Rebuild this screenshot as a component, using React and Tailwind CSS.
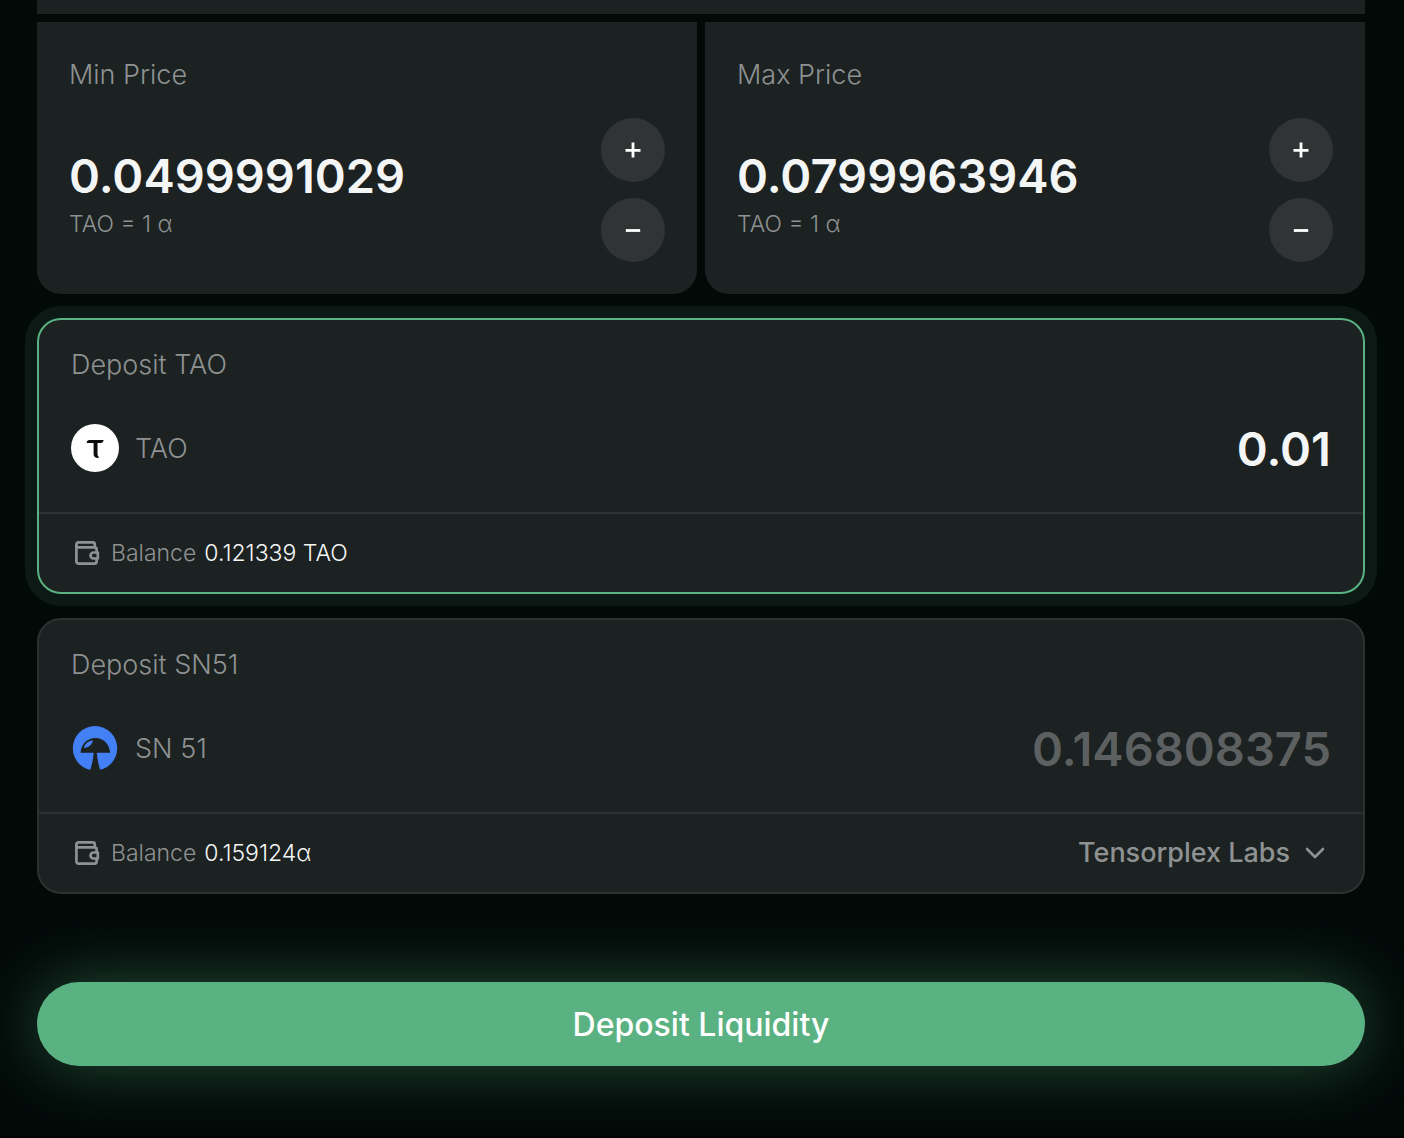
import { useState } from 'react';

function PlusIcon() {
  return (
    <svg width="16" height="16" viewBox="0 0 16 16" fill="none" stroke="currentColor" strokeWidth="2.8" aria-hidden="true">
      <path d="M8 0.5v15M0.5 8.4h15" />
    </svg>
  );
}

function MinusIcon() {
  return (
    <svg width="16" height="16" viewBox="0 0 16 16" fill="none" stroke="currentColor" strokeWidth="2.8" aria-hidden="true">
      <path d="M0.8 8.5h14.4" />
    </svg>
  );
}

function WalletIcon() {
  return (
    <svg width="32" height="32" viewBox="0 0 32 32" fill="none" stroke="currentColor" strokeWidth="2.7" strokeLinecap="round" strokeLinejoin="round" className="shrink-0 text-[#8e9292]" aria-hidden="true">
      <path d="M25.6 14.4v-2.2a1.9 1.9 0 0 0-1.9-1.9H7.4a2 2 0 0 1-2-2v-.9a2 2 0 0 1 2-2h14.4a2 2 0 0 1 2 2v2.800" />
      <path d="M5.4 8.300v16.100a2.200 2.200 0 0 0 2.200 2.200h16a2 2 0 0 0 2-2v-2.400" />
      <path d="M26.800 15.500h-4.300a3 3 0 0 0 0 6h4.300z" />
    </svg>
  );
}

function TaoLogo() {
  return (
    <svg width="48" height="48" viewBox="0 0 48 48" className="shrink-0" aria-hidden="true">
      <circle cx="24" cy="24" r="24" fill="#fff" />
      <path d="M18.4 16h14.2c-.3 1.9-1.2 2.900-2.800 2.900h-3.300v10.400c0 1.900.3 3.200 1.800 4-2.600 1.500-5.700.3-5.700-3.200V18.900h-7c.3-1.900 1.200-2.900 2.800-2.900z" fill="#0b0d0d" />
    </svg>
  );
}

function SubnetLogo() {
  return (
    <svg width="48" height="48" viewBox="0 0 48 48" className="shrink-0" aria-hidden="true">
      <circle cx="24" cy="24.3" r="22.2" fill="#4380f5" />
      <path d="M9.6 28.8C9.9 20.5 16 14 24.4 14S38.7 20.5 39.1 28.8H25.8C26.2 35 27.6 41 29.7 48H18.6C20.9 41 22.4 35 22.7 28.8z" fill="#1c2121" />
      <path d="M12.8 24C13.6 20 17 16.8 21.9 16.5 21.3 20.3 18 23.6 12.8 24z" fill="#4380f5" />
    </svg>
  );
}

function PriceCard({ id, label, initial }) {
  const [price, setPrice] = useState(initial);

  function step(amount) {
    setPrice((Number(price) + amount).toFixed(10));
  }

  return (
    <div className="flex-1 min-w-0 bg-[#1c2121] rounded-b-3xl p-8">
      <label htmlFor={id} className="block text-[27px] leading-[42px] font-light text-[#8e9292]">
        {label}
      </label>
      <div className="mt-[22px] flex items-center gap-4">
        <div className="flex-1 min-w-0 pt-1">
          <input
            id={id}
            value={price}
            onChange={(e) => setPrice(e.target.value)}
            className="block w-full h-16 bg-transparent text-[47px] font-semibold text-[#f4f6f6] outline-none"
          />
          <p className="text-[23px] leading-8 font-light text-[#8e9292]">TAO = 1 α</p>
        </div>
        <div className="flex flex-col gap-4">
          <button aria-label={`Increase ${label}`} onClick={() => step(0.0001)} className="size-16 rounded-full bg-[#303434] text-white flex items-center justify-center">
            <PlusIcon />
          </button>
          <button aria-label={`Decrease ${label}`} onClick={() => step(-0.0001)} className="size-16 rounded-full bg-[#303434] text-white flex items-center justify-center">
            <MinusIcon />
          </button>
        </div>
      </div>
    </div>
  );
}

function DepositCard({ id, label, logo, token, initial, balance, active, children }) {
  const [amount, setAmount] = useState(initial);

  return (
    <div
      className={
        active
          ? 'mt-6 bg-[#1c2121] border-2 border-[#5ab181] rounded-3xl shadow-[0_0_0_12px_#0c1914]'
          : 'mt-6 bg-[#1c2121] border-2 border-[#2d3131] rounded-3xl'
      }
    >
      <div className="px-8 pt-6 pb-8">
        <label htmlFor={id} className="block text-[27px] leading-[42px] font-light text-[#8e9292]">
          {label}
        </label>
        <div className="mt-[30px] flex items-center gap-4">
          {logo}
          <span className="pt-0.5 text-[27px] leading-[42px] font-light text-[#8e9292]">{token}</span>
          <input
            id={id}
            value={amount}
            onChange={(e) => setAmount(e.target.value)}
            className={
              active
                ? 'flex-1 min-w-0 h-16 pt-0.5 bg-transparent text-right text-[47px] font-semibold text-[#f4f6f6] outline-none'
                : 'flex-1 min-w-0 h-16 pt-0.5 bg-transparent text-right text-[47px] font-semibold text-[#5c6060] outline-none'
            }
          />
        </div>
      </div>
      <div className="h-20 px-8 border-t-2 border-[#2d3131] flex items-center justify-between">
        <p className="flex items-center gap-2 text-[23px] leading-8 font-light text-[#8e9292]">
          <WalletIcon />
          Balance
          <span className="text-[#f4f6f6]">{balance}</span>
        </p>
        {children}
      </div>
    </div>
  );
}

function ValidatorSelect() {
  return (
    <div className="relative flex items-center text-[#8e9292]">
      <select aria-label="Validator" className="appearance-none bg-transparent pr-10 text-[27px] leading-[42px] font-medium outline-none">
        <option>Tensorplex Labs</option>
      </select>
      <svg width="20" height="12" viewBox="0 0 20 12" fill="none" stroke="currentColor" strokeWidth="2.6" strokeLinecap="round" strokeLinejoin="round" className="absolute right-1.5 pointer-events-none" aria-hidden="true">
        <path d="M2 2l8 8 8-8" />
      </svg>
    </div>
  );
}

function App() {
  return (
    <main className="min-h-screen bg-[#020a08] border-b-2 border-black pl-[37px] pr-[39px] pb-[70px] font-['Inter',sans-serif]">
      <div className="h-3.5 bg-[#1c2121]" />

      <div className="mt-2 flex gap-2">
        <PriceCard id="min-price" label="Min Price" initial="0.0499991029" />
        <PriceCard id="max-price" label="Max Price" initial="0.0799963946" />
      </div>

      <DepositCard id="deposit-tao" label="Deposit TAO" logo={<TaoLogo />} token="TAO" initial="0.01" balance="0.121339 TAO" active />
      <DepositCard id="deposit-sn51" label="Deposit SN51" logo={<SubnetLogo />} token="SN 51" initial="0.146808375" balance="0.159124α">
        <ValidatorSelect />
      </DepositCard>

      <button className="mt-[88px] w-full h-21 pt-0.5 rounded-full bg-[#5ab181] text-[32px] font-medium text-white shadow-[0_0_64px_rgba(90,177,129,0.4)]">
        Deposit Liquidity
      </button>
    </main>
  );
}

export default App;
